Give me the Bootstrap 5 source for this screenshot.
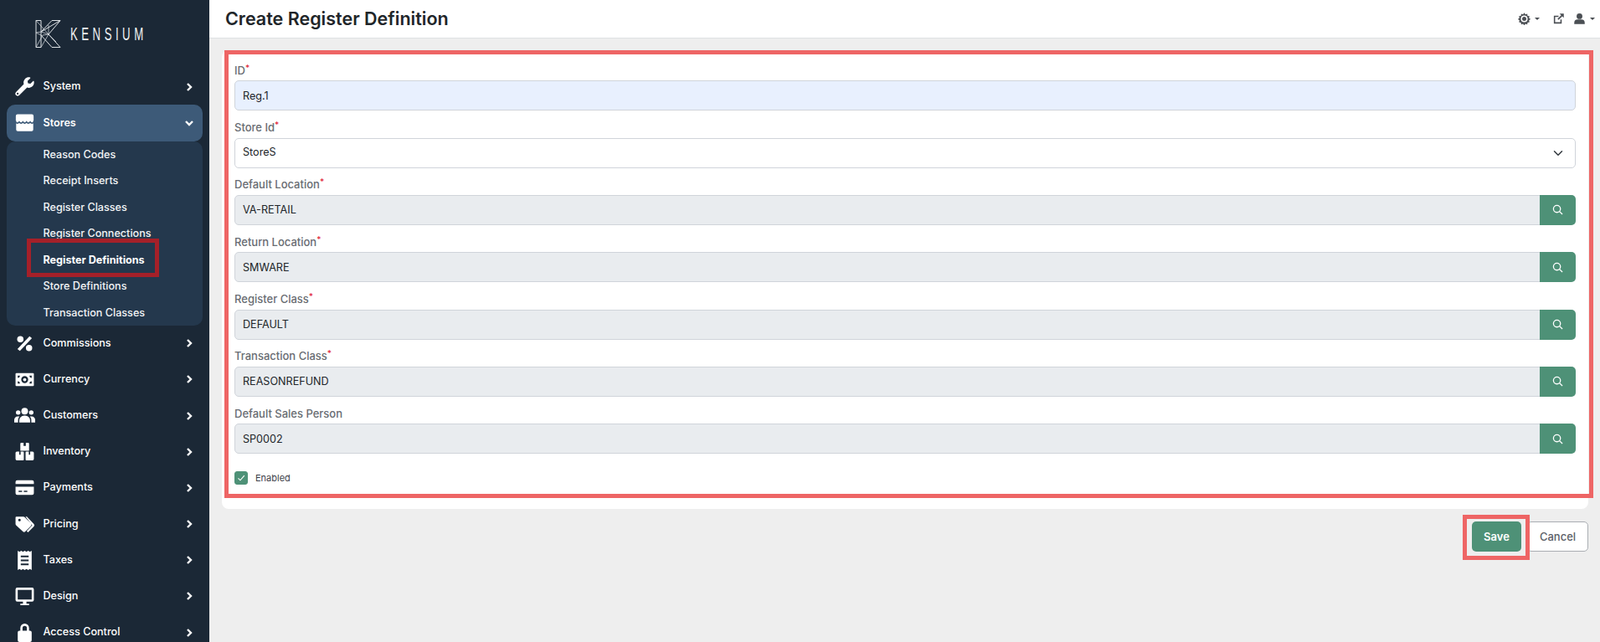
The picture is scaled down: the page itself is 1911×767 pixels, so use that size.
<!DOCTYPE html>
<html lang="en">
<head>
  <meta charset="UTF-8">
  <meta name="viewport" content="width=device-width, initial-scale=1.0">
  <title>Create Register Definition</title>
  <link href="https://cdn.jsdelivr.net/npm/bootstrap@5.3.0/dist/css/bootstrap.min.css" rel="stylesheet">
  <style>
    html, body { height: 100%; overflow: hidden; }
    body { font-family: Inter, "Liberation Sans", sans-serif; font-size: 13px; background: #eeeeee; color: #212529; }
    .app-side { width: 250px; height: 767px; flex: none; background: #1b2836; overflow: hidden; }
    .side-logo { height: 82.2px; padding: 24px 0 0 42px; }
    .logo-word { font-family: "Liberation Sans", sans-serif; font-size: 22px; letter-spacing: 7.5px; color: #f0f2f4; line-height: 34px; margin-left: 10px; transform: scaleX(0.6); transform-origin: left center; white-space: nowrap; }
    .side-menu { padding: 0 8px; }
    .side-menu .nav-link { height: 43.2px; padding: 0 11px 0 9px; color: #fff; font-weight: 500; font-size: 12.6px; border-radius: 10px; }
    .side-menu .nav-link.active-group { background: #3d5a78; font-weight: 600; }
    .side-ico { width: 25px; height: 25px; margin-right: 9.5px; flex: none; fill: #fff; }
    .side-chev { width: 10px; height: 10px; margin-left: auto; fill: none; stroke: #fff; stroke-width: 2.4; }
    .side-sub { background: #24384d; border-radius: 10px; margin-bottom: -0.5px; }
    .side-sub a { display: block; height: 31.5px; line-height: 31.5px; padding-left: 43.5px; color: #f2f4f6; font-size: 12.6px; font-weight: 500; text-decoration: none; }
    .side-sub a.current { font-weight: 700; color: #fff; position: relative; }
    .side-mark { position: absolute; left: 24px; top: -9.6px; width: 158px; height: 46px; border: 5px solid #a52029; }
    .app-top { height: 46px; background: #fff; border-bottom: 1px solid #dfe1e3; padding: 0 6.5px 0 19px; }
    .app-title { font-size: 21.5px; font-weight: 600; margin: 0; color: #212529; }
    .top-ico { width: 15px; height: 15px; fill: #4b4f54; }
    .top-caret { width: 0; height: 0; border: 3.5px solid transparent; border-top-color: #4b4f54; border-bottom: 0; margin-left: 5px; }
    .top-link { margin: 0 10px 0 15px; }
    .app-body { padding: 14px 14px 0 15px; }
    .form-panel { background: #fff; border: 0; border-radius: 8px; padding: 13.9px 15px 0; height: 548px; }
    .shot-mark { position: absolute; border: 5px solid #ee6565; pointer-events: none; }
    .form-panel .shot-mark { left: 3px; top: 0; right: -6px; bottom: 13px; }
    .save-wrap .shot-mark { left: -11px; right: -10px; top: -8px; bottom: -10px; }
    .fld { margin-bottom: 9.8px; }
    .fld-label { display: block; font-size: 13px; font-weight: 550; color: #686c72; line-height: 20px; margin-bottom: 2.5px; }
    .fld-label i { color: #e22b3c; font-style: normal; font-size: 10px; vertical-align: 4px; line-height: 0; }
    .form-panel .form-control, .form-panel .form-select { height: 36px; font-size: 12.6px; padding: 0 9px; border-color: #d0d4da; border-radius: 5px; color: #212529; }
    .form-panel .form-control:disabled { background: #e9ecef; opacity: 1; }
    .form-panel .form-control.filled { background: #e8f0fe; }
    .find-btn { width: 43px; padding: 0; background: #4e9177; border: 0; display: flex; align-items: center; justify-content: center; border-radius: 0 5px 5px 0; }
    .find-btn svg { width: 13px; height: 13px; fill: none; stroke: #fff; stroke-width: 1.4; }
    .enable-row { margin-top: 20.8px; min-height: 16px; padding: 0; gap: 9px; }
    .enable-row .form-check-input { width: 16px; height: 16px; float: none; margin: 0; background-color: #4e9177; border-color: #4e9177; border-radius: 3px; opacity: 1; background-image: url("data:image/svg+xml,%3csvg xmlns='http://www.w3.org/2000/svg' viewBox='0 0 20 20'%3e%3cpath fill='none' stroke='%23fff' stroke-width='1.6' d='M5 10.500l3.500 3.500 7-8'/%3e%3c/svg%3e"); }
    .enable-row .form-check-label { font-size: 11px; color: #3c4148; line-height: 16px; }
    .act-row { margin-top: 15px; gap: 7px; }
    .act-btn { height: 36px; font-size: 13px; font-weight: 600; border-radius: 5px; padding: 1px 0 0; }
    .btn-save { width: 59px; background: #4e9177; color: #fff; border: 0; }
    .btn-cancel { width: 73px; background: #fff; color: #5b6068; border: 1px solid #a9adb2; font-weight: 500; }
  </style>
</head>
<body>
  <div class="d-flex">
    <aside class="app-side">
      <div class="side-logo d-flex align-items-start">
        <svg width="32" height="33" viewBox="0 0 32 33" fill="none" stroke="#dfe3e6" stroke-width="1">
          <path d="M1 0.5H7V32.5H1ZM7 14L30 0.5H20L7 14ZM7 18L20 32.500H30L16 17L30 0.5"/>
          <path d="M1 0.5L16 17L7 32.500M1 15L7 14L16 17M1 32.500L9 18L16 17M1 15L7 18M16 6L16 17L25 26" stroke-width="0.7"/>
        </svg>
        <span class="logo-word">KENSIUM</span>
      </div>
      <nav class="side-menu nav flex-column">
        <a class="nav-link d-flex align-items-center" href="#">
          <svg class="side-ico" viewBox="-30 -30 572 572"><path d="M507.73 109.1c-2.24-9.03-13.54-12.09-20.12-5.51l-74.36 74.36-67.88-11.31-11.31-67.88 74.36-74.36c6.62-6.62 3.43-17.9-5.66-20.16-47.38-11.74-99.55.91-136.58 37.93-39.64 39.64-50.55 97.1-34.05 147.2L18.74 402.76c-24.99 24.99-24.99 65.51 0 90.5 24.99 24.99 65.51 24.99 90.5 0l213.21-213.21c50.12 16.71 107.47 5.68 147.37-34.22 37.07-37.07 49.7-89.32 37.91-136.73zM64 472c-13.25 0-24-10.75-24-24 0-13.26 10.75-24 24-24s24 10.74 24 24c0 13.25-10.75 24-24 24z"/></svg>
          System
          <svg class="side-chev" viewBox="0 0 10 10"><path d="M3 1l4 4-4 4"/></svg>
        </a>
        <a class="nav-link active-group d-flex align-items-center" href="#">
          <svg class="side-ico" viewBox="0 0 24 24"><path d="M3.800 2.500h16.400a2 2 0 0 1 2 2V9.500H21.800V20a1.800 1.800 0 0 1-1.800 1.800H4A1.800 1.800 0 0 1 2.200 20V9.500H1.800V4.500a2 2 0 0 1 2-2z"/><path d="M1.500 11.200q2.100 2.800 4.200 0q2.100 2.800 4.200 0q2.100 2.800 4.200 0q2.100 2.800 4.200 0q2.100 2.800 4.200 0" fill="none" stroke="#3d5a78" stroke-width="1.500"/></svg>
          Stores
          <svg class="side-chev" viewBox="0 0 10 10"><path d="M1 3l4 4 4-4"/></svg>
        </a>
        <div class="side-sub">
          <a href="#">Reason Codes</a>
          <a href="#">Receipt Inserts</a>
          <a href="#">Register Classes</a>
          <a href="#">Register Connections</a>
          <a class="current" href="#"><span class="side-mark"></span>Register Definitions</a>
          <a href="#">Store Definitions</a>
          <a href="#">Transaction Classes</a>
        </div>
        <a class="nav-link d-flex align-items-center" href="#">
          <svg class="side-ico" viewBox="0 0 24 24"><path d="M17.500 3.500l2.800 2.200L6.500 20.500l-2.800-2.200z"/><circle cx="7" cy="7" r="3.600"/><circle cx="17" cy="17" r="3.600"/></svg>
          Commissions
          <svg class="side-chev" viewBox="0 0 10 10"><path d="M3 1l4 4-4 4"/></svg>
        </a>
        <a class="nav-link d-flex align-items-center" href="#">
          <svg class="side-ico" viewBox="0 0 24 24"><path fill-rule="evenodd" d="M2.500 4.500h19a1 1 0 0 1 1 1v13a1 1 0 0 1-1 1h-19a1 1 0 0 1-1-1v-13a1 1 0 0 1 1-1zM12 8a4 4 0 1 0 0 8 4 4 0 0 0 0-8zM4 7.500v2.500a2.500 2.500 0 0 0 2.500-2.500zM17.500 7.500A2.500 2.500 0 0 0 20 10V7.500zM4 14v2.500h2.500A2.500 2.500 0 0 0 4 14zM20 14a2.500 2.500 0 0 0-2.500 2.500H20z"/><circle cx="12" cy="12" r="1.800"/></svg>
          Currency
          <svg class="side-chev" viewBox="0 0 10 10"><path d="M3 1l4 4-4 4"/></svg>
        </a>
        <a class="nav-link d-flex align-items-center" href="#">
          <svg class="side-ico" viewBox="0 0 24 24"><circle cx="12" cy="7" r="3.800"/><circle cx="4.500" cy="8.500" r="2.600"/><circle cx="19.500" cy="8.500" r="2.600"/><path d="M5.800 20v-2.500A5.500 5.500 0 0 1 11.300 12h1.400a5.500 5.500 0 0 1 5.500 5.500V20zM0 20v-3a4 4 0 0 1 4-4h2a7 7 0 0 0-1.600 4.500V20zM24 20v-3a4 4 0 0 0-4-4h-2a7 7 0 0 1 1.600 4.500V20z"/></svg>
          Customers
          <svg class="side-chev" viewBox="0 0 10 10"><path d="M3 1l4 4-4 4"/></svg>
        </a>
        <a class="nav-link d-flex align-items-center" href="#">
          <svg class="side-ico" viewBox="0 0 24 24"><path d="M8 2h2.700v3.500h2.600V2H16a1 1 0 0 1 1 1v7.500a.5.500 0 0 1-.5.500h-9a.5.500 0 0 1-.5-.5V3a1 1 0 0 1 1-1zM3 12h2.700v3.500h1.600V12H10a1 1 0 0 1 1 1v8a1 1 0 0 1-1 1H3a1.500 1.500 0 0 1-1.500-1.500V13.500A1.500 1.500 0 0 1 3 12zM14 12h2.700v3.500h1.600V12H21a1.500 1.500 0 0 1 1.500 1.500v7A1.500 1.500 0 0 1 21 22h-7a1 1 0 0 1-1-1v-8a1 1 0 0 1 1-1z"/></svg>
          Inventory
          <svg class="side-chev" viewBox="0 0 10 10"><path d="M3 1l4 4-4 4"/></svg>
        </a>
        <a class="nav-link d-flex align-items-center" href="#">
          <svg class="side-ico" viewBox="0 0 24 24"><path d="M3.500 3.500h17a2 2 0 0 1 2 2V8h-21V5.500a2 2 0 0 1 2-2zM1.500 11h21v7.500a2 2 0 0 1-2 2h-17a2 2 0 0 1-2-2zM5 15.500v1.500h4v-1.500zM11 15.500v1.500h4v-1.500z" fill-rule="evenodd"/></svg>
          Payments
          <svg class="side-chev" viewBox="0 0 10 10"><path d="M3 1l4 4-4 4"/></svg>
        </a>
        <a class="nav-link d-flex align-items-center" href="#">
          <svg class="side-ico" viewBox="0 0 24 24"><path fill-rule="evenodd" d="M2.500 3h8a2 2 0 0 1 1.400.6l7.300 7.300a2 2 0 0 1 0 2.800l-6.500 6.500a2 2 0 0 1-2.800 0L2.100 12.900a2 2 0 0 1-.6-1.400V4a1 1 0 0 1 1-1zM6 5.500a1.500 1.500 0 1 0 0 3 1.500 1.500 0 0 0 0-3z"/><path d="M14.500 3l8 8.500a2 2 0 0 1 0 2.800L15.800 21l-1.500-1.400 6.300-6.700-7.700-9.900z"/></svg>
          Pricing
          <svg class="side-chev" viewBox="0 0 10 10"><path d="M3 1l4 4-4 4"/></svg>
        </a>
        <a class="nav-link d-flex align-items-center" href="#">
          <svg class="side-ico" viewBox="0 0 24 24"><path fill-rule="evenodd" d="M4 1l2 1.200L8 1l2 1.200L12 1l2 1.200L16 1l2 1.200L20 1v22l-2-1.200-2 1.200-2-1.200-2 1.200-2-1.200-2 1.200-2-1.200L4 23zM7.500 6.500v2h9v-2zM7.500 11v2h9v-2zM7.500 15.500v2h9v-2z"/></svg>
          Taxes
          <svg class="side-chev" viewBox="0 0 10 10"><path d="M3 1l4 4-4 4"/></svg>
        </a>
        <a class="nav-link d-flex align-items-center" href="#">
          <svg class="side-ico" viewBox="0 0 24 24"><path fill-rule="evenodd" d="M3.500 2h17a2 2 0 0 1 2 2v12a2 2 0 0 1-2 2H14v2.500h3V22H7v-1.500h3V18H3.500a2 2 0 0 1-2-2V4a2 2 0 0 1 2-2zM4 4.500V15.500h16V4.500z"/></svg>
          Design
          <svg class="side-chev" viewBox="0 0 10 10"><path d="M3 1l4 4-4 4"/></svg>
        </a>
        <a class="nav-link d-flex align-items-center" href="#">
          <svg class="side-ico" viewBox="0 0 24 24"><path fill-rule="evenodd" d="M7 10V7a5 5 0 0 1 10 0v3h1a2 2 0 0 1 2 2v9a2 2 0 0 1-2 2H6a2 2 0 0 1-2-2v-9a2 2 0 0 1 2-2zM9.500 10h5V7a2.500 2.500 0 0 0-5 0z"/></svg>
          Access Control
          <svg class="side-chev" viewBox="0 0 10 10"><path d="M3 1l4 4-4 4"/></svg>
        </a>
      </nav>
    </aside>

    <div class="flex-grow-1 d-flex flex-column">
      <header class="app-top d-flex align-items-center">
        <h1 class="app-title">Create Register Definition</h1>
        <div class="ms-auto d-flex align-items-center">
          <div class="d-flex align-items-center">
            <svg class="top-ico" viewBox="0 0 24 24"><path fill-rule="evenodd" d="M12 .5l2.200 3 3.600-1 .6 3.700 3.700.6-1 3.600 3 2.200-3 2.200 1 3.600-3.700.6-.6 3.700-3.600-1-2.200 3-2.200-3-3.600 1-.6-3.700-3.700-.6 1-3.600-3-2.200 3-2.200-1-3.600 3.700-.6.6-3.700 3.600 1zM12 5.500a6.500 6.500 0 1 0 0 13 6.500 6.500 0 0 0 0-13z"/><circle cx="12" cy="12" r="4"/></svg>
            <span class="top-caret"></span>
          </div>
          <svg class="top-ico top-link" viewBox="0 0 24 24"><path d="M3 6h9v2.500H5.500v10h10V13H18v8H3zM14 2h8v8l-3-3-7 7-2-2 7-7z"/></svg>
          <div class="d-flex align-items-center">
            <svg class="top-ico" viewBox="0 0 24 24"><circle cx="12" cy="7" r="5.500"/><path d="M2 22v-2.500A6.500 6.500 0 0 1 8.500 13h7a6.500 6.500 0 0 1 6.500 6.500V22z"/></svg>
            <span class="top-caret"></span>
          </div>
        </div>
      </header>

      <main class="app-body">
        <form class="form-panel position-relative">
          <div class="fld">
            <label class="fld-label">ID<i>*</i></label>
            <input class="form-control filled" value="Reg.1">
          </div>
          <div class="fld">
            <label class="fld-label">Store Id<i>*</i></label>
            <select class="form-select"><option>StoreS</option></select>
          </div>
          <div class="fld">
            <label class="fld-label">Default Location<i>*</i></label>
            <div class="input-group">
              <input class="form-control" value="VA-RETAIL" disabled>
              <button class="btn find-btn" type="button"><svg viewBox="0 0 14 14"><circle cx="6" cy="6" r="4.500"/><path d="M9.300 9.300L13 13"/></svg></button>
            </div>
          </div>
          <div class="fld">
            <label class="fld-label">Return Location<i>*</i></label>
            <div class="input-group">
              <input class="form-control" value="SMWARE" disabled>
              <button class="btn find-btn" type="button"><svg viewBox="0 0 14 14"><circle cx="6" cy="6" r="4.500"/><path d="M9.300 9.300L13 13"/></svg></button>
            </div>
          </div>
          <div class="fld">
            <label class="fld-label">Register Class<i>*</i></label>
            <div class="input-group">
              <input class="form-control" value="DEFAULT" disabled>
              <button class="btn find-btn" type="button"><svg viewBox="0 0 14 14"><circle cx="6" cy="6" r="4.500"/><path d="M9.300 9.300L13 13"/></svg></button>
            </div>
          </div>
          <div class="fld">
            <label class="fld-label">Transaction Class<i>*</i></label>
            <div class="input-group">
              <input class="form-control" value="REASONREFUND" disabled>
              <button class="btn find-btn" type="button"><svg viewBox="0 0 14 14"><circle cx="6" cy="6" r="4.500"/><path d="M9.300 9.300L13 13"/></svg></button>
            </div>
          </div>
          <div class="fld">
            <label class="fld-label">Default Sales Person</label>
            <div class="input-group">
              <input class="form-control" value="SP0002" disabled>
              <button class="btn find-btn" type="button"><svg viewBox="0 0 14 14"><circle cx="6" cy="6" r="4.500"/><path d="M9.300 9.300L13 13"/></svg></button>
            </div>
          </div>
          <div class="form-check enable-row d-flex align-items-center">
            <input class="form-check-input" type="checkbox" id="enabled" checked>
            <label class="form-check-label" for="enabled">Enabled</label>
          </div>
          <div class="shot-mark"></div>
        </form>
        <div class="act-row d-flex justify-content-end">
          <div class="save-wrap position-relative">
            <button class="btn act-btn btn-save" type="button">Save</button>
            <div class="shot-mark"></div>
          </div>
          <button class="btn act-btn btn-cancel" type="button">Cancel</button>
        </div>
      </main>
    </div>
  </div>
  <script src="https://cdn.jsdelivr.net/npm/bootstrap@5.3.0/dist/js/bootstrap.bundle.min.js"></script>
</body>
</html>
